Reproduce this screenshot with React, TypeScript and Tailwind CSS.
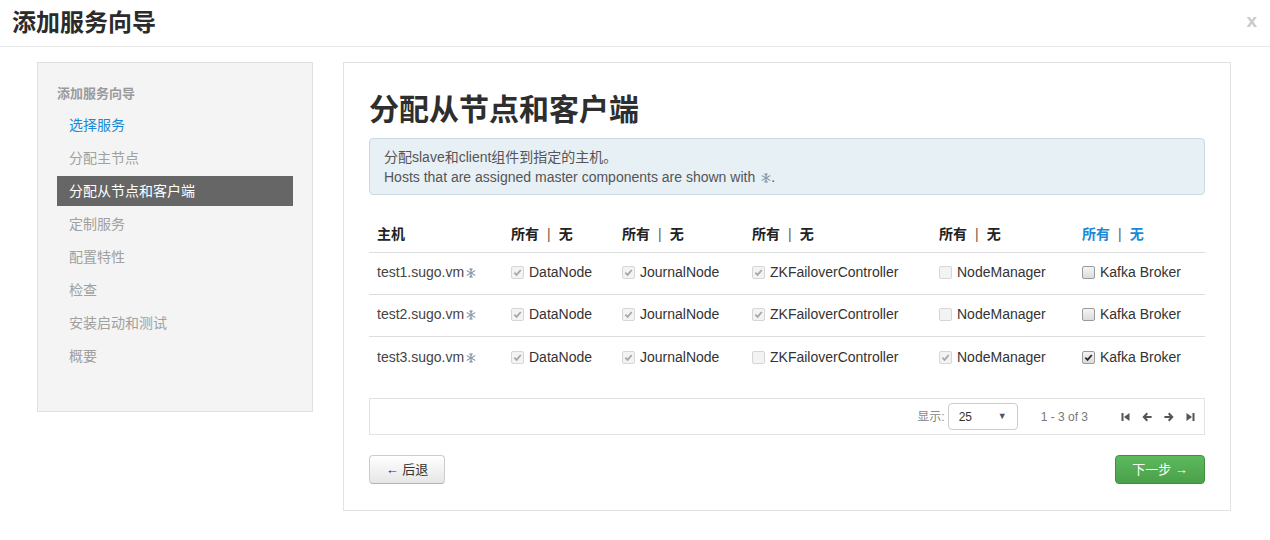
import React from "react";

const font = { fontFamily: '"Liberation Sans", "Noto Sans CJK SC", sans-serif' };

type Box = "on-dis" | "off-dis" | "off" | "on";

const Check = ({ state }: { state: Box }) => {
  const dis = state === "on-dis" || state === "off-dis";
  const checked = state === "on-dis" || state === "on";
  return (
    <span
      className={
        "inline-flex w-[13px] h-[13px] rounded-[2px] border items-center justify-center shrink-0 " +
        (dis ? "border-[#d6d6d6] bg-[#f3f3f3]" : "border-[#9a9a9a] bg-gradient-to-b from-[#f4f4f4] to-[#dcdcdc]")
      }
    >
      {checked && (
        <svg width="9" height="9" viewBox="0 0 10 10">
          <path d="M1.5 5.2 L4 7.7 L8.6 2.2" fill="none" stroke={dis ? "#a8a8a8" : "#2a2a2a"} strokeWidth="2" />
        </svg>
      )}
    </span>
  );
};

// small snowflake used to flag master hosts
const Flake = () => (
  <svg width="10" height="10" viewBox="0 0 10 10" className="ml-[2px] mt-[1px]">
    <g stroke="#8b9bb0" strokeWidth="1.1" strokeLinecap="round">
      <path d="M5 0.5 V9.5" />
      <path d="M1.1 2.75 L8.9 7.25" />
      <path d="M1.1 7.25 L8.9 2.75" />
      <path d="M3.8 1 L5 2.2 L6.2 1" fill="none" />
      <path d="M3.8 9 L5 7.8 L6.2 9" fill="none" />
    </g>
    <circle cx="5" cy="5" r="1.3" fill="#8b9bb0" />
  </svg>
);

const rows: { host: string; boxes: Box[] }[] = [
  { host: "test1.sugo.vm", boxes: ["on-dis", "on-dis", "on-dis", "off-dis", "off"] },
  { host: "test2.sugo.vm", boxes: ["on-dis", "on-dis", "on-dis", "off-dis", "off"] },
  { host: "test3.sugo.vm", boxes: ["on-dis", "on-dis", "off-dis", "on-dis", "on"] },
];
const labels = ["DataNode", "JournalNode", "ZKFailoverController", "NodeManager", "Kafka Broker"];
const cols = "grid grid-cols-[134px_111px_130px_187px_143px_1fr]";

const steps = ["选择服务", "分配主节点", "分配从节点和客户端", "定制服务", "配置特性", "检查", "安装启动和测试", "概要"];

const AllNone = ({ blue }: { blue?: boolean }) => (
  <span className="flex items-center">
    <span className={"font-bold " + (blue ? "text-[#1a8ad6]" : "text-[#222]")}>所有</span>
    <span className="mx-[8px] text-[#6b5a45]">|</span>
    <span className={"font-bold " + (blue ? "text-[#1a8ad6]" : "text-[#222]")}>无</span>
  </span>
);

export default function App() {
  return (
    <div style={font} className="w-[1270px] h-[540px] bg-white text-[#333] overflow-hidden">
      <div className="h-[47px] border-b border-[#e8e8e8] flex items-center justify-between pl-[12px] pr-[13px]">
        <h1 className="text-[24px] font-bold text-[#2b2b2b] leading-none">添加服务向导</h1>
        <span className="text-[19px] font-bold text-[#cacaca] -mt-[4px]">x</span>
      </div>

      <div className="flex pl-[37px] pt-[15px] gap-[30px]">
        <div className="w-[276px] h-[350px] bg-[#f4f4f4] border border-[#e0e0e0] px-[19px] pt-[21px]">
          <div className="h-[20px] leading-[20px] text-[13px] font-bold text-[#9a9a9a]">添加服务向导</div>
          <div className="mt-[6px] flex flex-col gap-[3px]">
            {steps.map((s, i) => (
              <div
                key={s}
                className={
                  "h-[30px] leading-[30px] pl-[12px] text-[14px] " +
                  (i === 2 ? "bg-[#666] text-white" : i === 0 ? "text-[#1a8ad6]" : "text-[#a0a0a0]")
                }
              >
                {s}
              </div>
            ))}
          </div>
        </div>

        <div className="w-[888px] h-[449px] border border-[#e3e3e3] px-[25px] pt-[25px]">
          <h2 className="text-[30px] font-bold leading-[44px] text-[#2e2e2e]">分配从节点和客户端</h2>
          <div className="mt-[6px] h-[57px] bg-[#e6f0f5] border border-[#cbdbe3] rounded-[4px] pl-[14px] pt-[8px] text-[14px] leading-[20px] text-[#555]">
            <div>分配slave和client组件到指定的主机。</div>
            <div className="flex items-center">
              Hosts that are assigned master components are shown with
              <span className="ml-[4px]"><Flake /></span>.
            </div>
          </div>

          <div className="mt-[21px]">
            <div className={cols + " h-[37px] items-center border-b border-[#dddddd] text-[14px]"}>
              <span className="pl-[8px] font-bold text-[#222]">主机</span>
              <span className="pl-[8px]"><AllNone /></span>
              <span className="pl-[8px]"><AllNone /></span>
              <span className="pl-[8px]"><AllNone /></span>
              <span className="pl-[8px]"><AllNone /></span>
              <span className="pl-[8px]"><AllNone blue /></span>
            </div>
            {rows.map((r, ri) => (
              <div
                key={r.host}
                className={cols + " h-[42px] pb-[2px] items-center text-[14px] " + (ri < 2 ? "border-b border-[#dddddd]" : "")}
              >
                <span className="pl-[8px] flex items-center text-[#444]">
                  {r.host}
                  <Flake />
                </span>
                {r.boxes.map((b, i) => (
                  <span key={i} className="pl-[8px] flex items-center gap-[5px] text-[#333]">
                    <Check state={b} />
                    {labels[i]}
                  </span>
                ))}
              </div>
            ))}
          </div>

          <div className="mt-[19px] h-[37px] border border-[#e3e3e3] flex items-center justify-end pr-[9px] text-[12px] text-[#666]">
            <span className="mr-[3px] text-[#888]">显示:</span>
            <div className="w-[70px] h-[27px] border border-[#ccc] rounded-[4px] flex items-center justify-between px-[10px] text-[#333]">
              <span>25</span>
              <span className="text-[9px] text-[#555]">▼</span>
            </div>
            <span className="ml-[23px] mr-[33px] text-[#777]">1 - 3 of 3</span>
            <div className="flex items-center gap-[12px]">
              <svg width="9" height="10" viewBox="0 0 9 10"><path d="M0.5 1h2v8h-2z M8.5 1v8L3 5z" fill="#555" /></svg>
              <svg width="10" height="10" viewBox="0 0 10 10"><path d="M4.6 0.6 L6 2 L4.2 4 H9.6 V6 H4.2 L6 8 L4.6 9.4 L0.4 5z" fill="#555" /></svg>
              <svg width="10" height="10" viewBox="0 0 10 10"><path d="M5.4 0.6 L4 2 L5.8 4 H0.4 V6 H5.8 L4 8 L5.4 9.4 L9.6 5z" fill="#555" /></svg>
              <svg width="9" height="10" viewBox="0 0 9 10"><path d="M6.5 1h2v8h-2z M0.5 1v8L6 5z" fill="#555" /></svg>
            </div>
          </div>

          <div className="mt-[20px] flex justify-between">
            <button className="w-[76px] h-[29px] rounded-[4px] border border-[#ccc] border-b-[#b3b3b3] bg-gradient-to-b from-white to-[#e6e6e6] text-[13px] text-[#333]">
              ← 后退
            </button>
            <button className="w-[90px] h-[29px] rounded-[4px] border border-[#3f8f3f] bg-gradient-to-b from-[#5dba5d] to-[#4aa04a] text-[13px] text-white">
              下一步 →
            </button>
          </div>
        </div>
      </div>
    </div>
  );
}
